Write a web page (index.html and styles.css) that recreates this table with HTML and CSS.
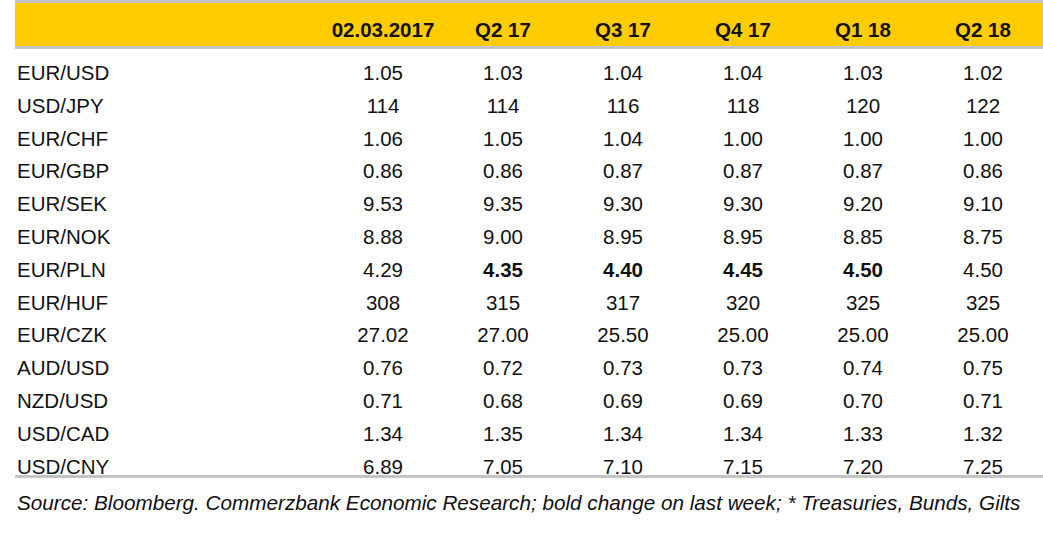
FILE: index.html
```html
<!DOCTYPE html>
<html>
<head>
<meta charset="utf-8">
<link rel="stylesheet" href="styles.css">
</head>
<body>
<div class="page">
  <table class="fx">
    <colgroup>
      <col class="c-label">
      <col class="c-val"><col class="c-val"><col class="c-val"><col class="c-val"><col class="c-val"><col class="c-val">
    </colgroup>
    <thead>
      <tr><th></th><th>02.03.2017</th><th>Q2 17</th><th>Q3 17</th><th>Q4 17</th><th>Q1 18</th><th>Q2 18</th></tr>
    </thead>
    <tbody>
      <tr><td>EUR/USD</td><td>1.05</td><td>1.03</td><td>1.04</td><td>1.04</td><td>1.03</td><td>1.02</td></tr>
      <tr><td>USD/JPY</td><td>114</td><td>114</td><td>116</td><td>118</td><td>120</td><td>122</td></tr>
      <tr><td>EUR/CHF</td><td>1.06</td><td>1.05</td><td>1.04</td><td>1.00</td><td>1.00</td><td>1.00</td></tr>
      <tr><td>EUR/GBP</td><td>0.86</td><td>0.86</td><td>0.87</td><td>0.87</td><td>0.87</td><td>0.86</td></tr>
      <tr><td>EUR/SEK</td><td>9.53</td><td>9.35</td><td>9.30</td><td>9.30</td><td>9.20</td><td>9.10</td></tr>
      <tr><td>EUR/NOK</td><td>8.88</td><td>9.00</td><td>8.95</td><td>8.95</td><td>8.85</td><td>8.75</td></tr>
      <tr><td>EUR/PLN</td><td>4.29</td><td class="b">4.35</td><td class="b">4.40</td><td class="b">4.45</td><td class="b">4.50</td><td>4.50</td></tr>
      <tr><td>EUR/HUF</td><td>308</td><td>315</td><td>317</td><td>320</td><td>325</td><td>325</td></tr>
      <tr><td>EUR/CZK</td><td>27.02</td><td>27.00</td><td>25.50</td><td>25.00</td><td>25.00</td><td>25.00</td></tr>
      <tr><td>AUD/USD</td><td>0.76</td><td>0.72</td><td>0.73</td><td>0.73</td><td>0.74</td><td>0.75</td></tr>
      <tr><td>NZD/USD</td><td>0.71</td><td>0.68</td><td>0.69</td><td>0.69</td><td>0.70</td><td>0.71</td></tr>
      <tr><td>USD/CAD</td><td>1.34</td><td>1.35</td><td>1.34</td><td>1.34</td><td>1.33</td><td>1.32</td></tr>
      <tr><td>USD/CNY</td><td>6.89</td><td>7.05</td><td>7.10</td><td>7.15</td><td>7.20</td><td>7.25</td></tr>
    </tbody>
  </table>
  <p class="source">Source: Bloomberg. Commerzbank Economic Research; bold change on last week; * Treasuries, Bunds, Gilts</p>
</div>
</body>
</html>
```
FILE: styles.css
```css
html, body {
  margin: 0;
  padding: 0;
  background: #fff;
}
.page {
  padding-left: 15px;
  font-family: "Liberation Sans", Arial, sans-serif;
  color: #111;
}
.fx {
  border-collapse: collapse;
  width: 1028px;
  table-layout: fixed;
  font-size: 20.5px;
}
.c-label { width: 308px; }
.c-val { width: 120px; }
.fx thead tr {
  background: #ffcc00;
  border-top: 3px solid #c4c4c4;
  border-bottom: 3px solid #c4c4c4;
}
.fx th {
  padding: 16.9px 0 6.1px 0;
  font-weight: bold;
  text-align: center;
  vertical-align: top;
  line-height: 20px;
}
.fx tbody tr:last-child {
  border-bottom: 3px solid #c4c4c4;
}
.fx td {
  padding: 16px 0 1.8px 0;
  line-height: 15px;
  text-align: center;
  vertical-align: top;
  white-space: nowrap;
}
.fx td:first-child {
  text-align: left;
  padding-left: 2px;
}
.fx td.b { font-weight: bold; }
.source {
  margin: 14px 0 0 2px;
  font-style: italic;
  font-size: 20.7px;
  line-height: 22px;
}
```
